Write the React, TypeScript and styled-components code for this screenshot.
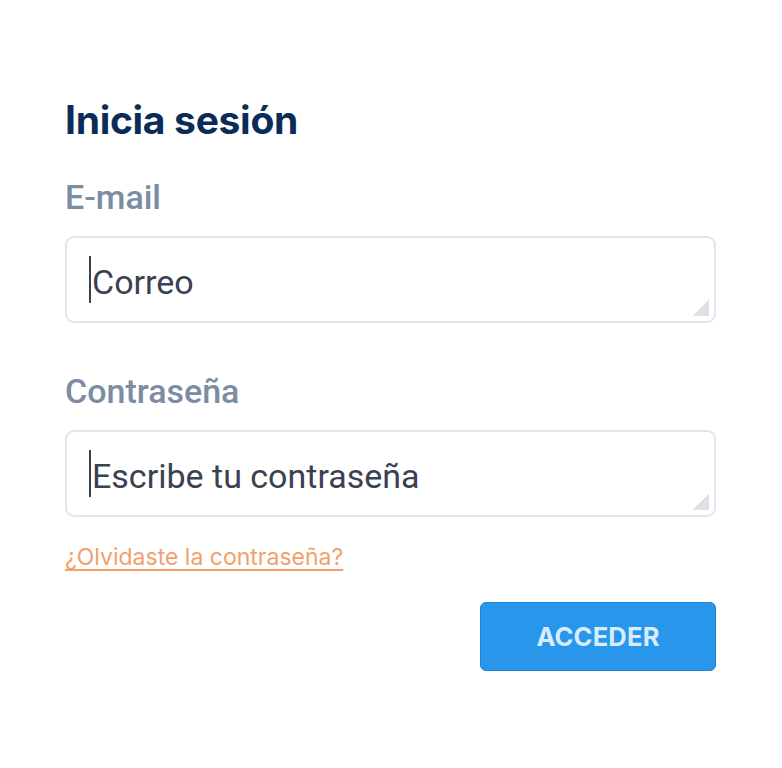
import styled, { createGlobalStyle } from 'styled-components';

const GlobalStyles = createGlobalStyle`
  html, body {
    margin: 0;
    padding: 0;
    background: #ffffff;
  }
`;

const Page = styled.div`
  width: 782px;
  min-height: 768px;
  box-sizing: border-box;
  padding: 95px 66px 0 65px;
  display: flex;
  flex-direction: column;
`;

const Title = styled.h1`
  margin: 0;
  font-family: Inter, 'Liberation Sans', sans-serif;
  font-weight: 700;
  font-size: 39px;
  line-height: 50px;
  color: #0b2b58;
  letter-spacing: -0.3px;
`;

const Field = styled.div<{ $top: number }>`
  margin-top: ${(p) => p.$top}px;
  display: flex;
  flex-direction: column;
`;

const Label = styled.label`
  font-family: Roboto, 'Liberation Sans', sans-serif;
  font-weight: 500;
  font-size: 34px;
  line-height: 40px;
  color: #7b8ca3;
  margin-bottom: 19px;
`;

const InputBox = styled.div`
  position: relative;
  height: 87px;
  box-sizing: border-box;
  border: 2px solid #e2e5eb;
  border-radius: 9px;
  background: #fff;
  display: flex;
  align-items: center;
  padding-left: 22px;
`;

const Caret = styled.span`
  width: 2px;
  height: 47px;
  background: #3a4150;
  margin-right: 1px;
`;

const Placeholder = styled.span`
  font-family: Roboto, 'Liberation Sans', sans-serif;
  font-size: 34px;
  color: #3a4150;
  padding-top: 4px;
`;

const Grip = styled.span`
  position: absolute;
  right: 5px;
  bottom: 5px;
  width: 16px;
  height: 16px;
  background: linear-gradient(135deg, transparent 50%, #dde0e7 50%);
`;

const Forgot = styled.a`
  margin-top: 25px;
  align-self: flex-start;
  font-family: Inter, 'Liberation Sans', sans-serif;
  font-size: 23px;
  line-height: 30px;
  color: #f2a06b;
  text-decoration: underline;
  text-underline-offset: 4px;
  cursor: pointer;
`;

const Actions = styled.div`
  margin-top: 30px;
  display: flex;
  justify-content: flex-end;
`;

const Button = styled.button`
  width: 236px;
  height: 69px;
  border: 1px solid #1d84d6;
  border-radius: 6px;
  background: #2896ea;
  color: #d8ecfc;
  font-family: Inter, 'Liberation Sans', sans-serif;
  font-weight: 700;
  font-size: 25.5px;
  letter-spacing: 0.2px;
  cursor: pointer;
`;

const TextField = ({ label, placeholder, top }: { label: string; placeholder: string; top: number }) => (
  <Field $top={top}>
    <Label>{label}</Label>
    <InputBox>
      <Caret />
      <Placeholder>{placeholder}</Placeholder>
      <Grip />
    </InputBox>
  </Field>
);

export default function App() {
  return (
    <>
      <GlobalStyles />
      <Page>
        <Title>Inicia sesión</Title>
        <TextField label="E-mail" placeholder="Correo" top={32} />
        <TextField label="Contraseña" placeholder="Escribe tu contraseña" top={48} />
        <Forgot>¿Olvidaste la contraseña?</Forgot>
        <Actions>
          <Button>ACCEDER</Button>
        </Actions>
      </Page>
    </>
  );
}
